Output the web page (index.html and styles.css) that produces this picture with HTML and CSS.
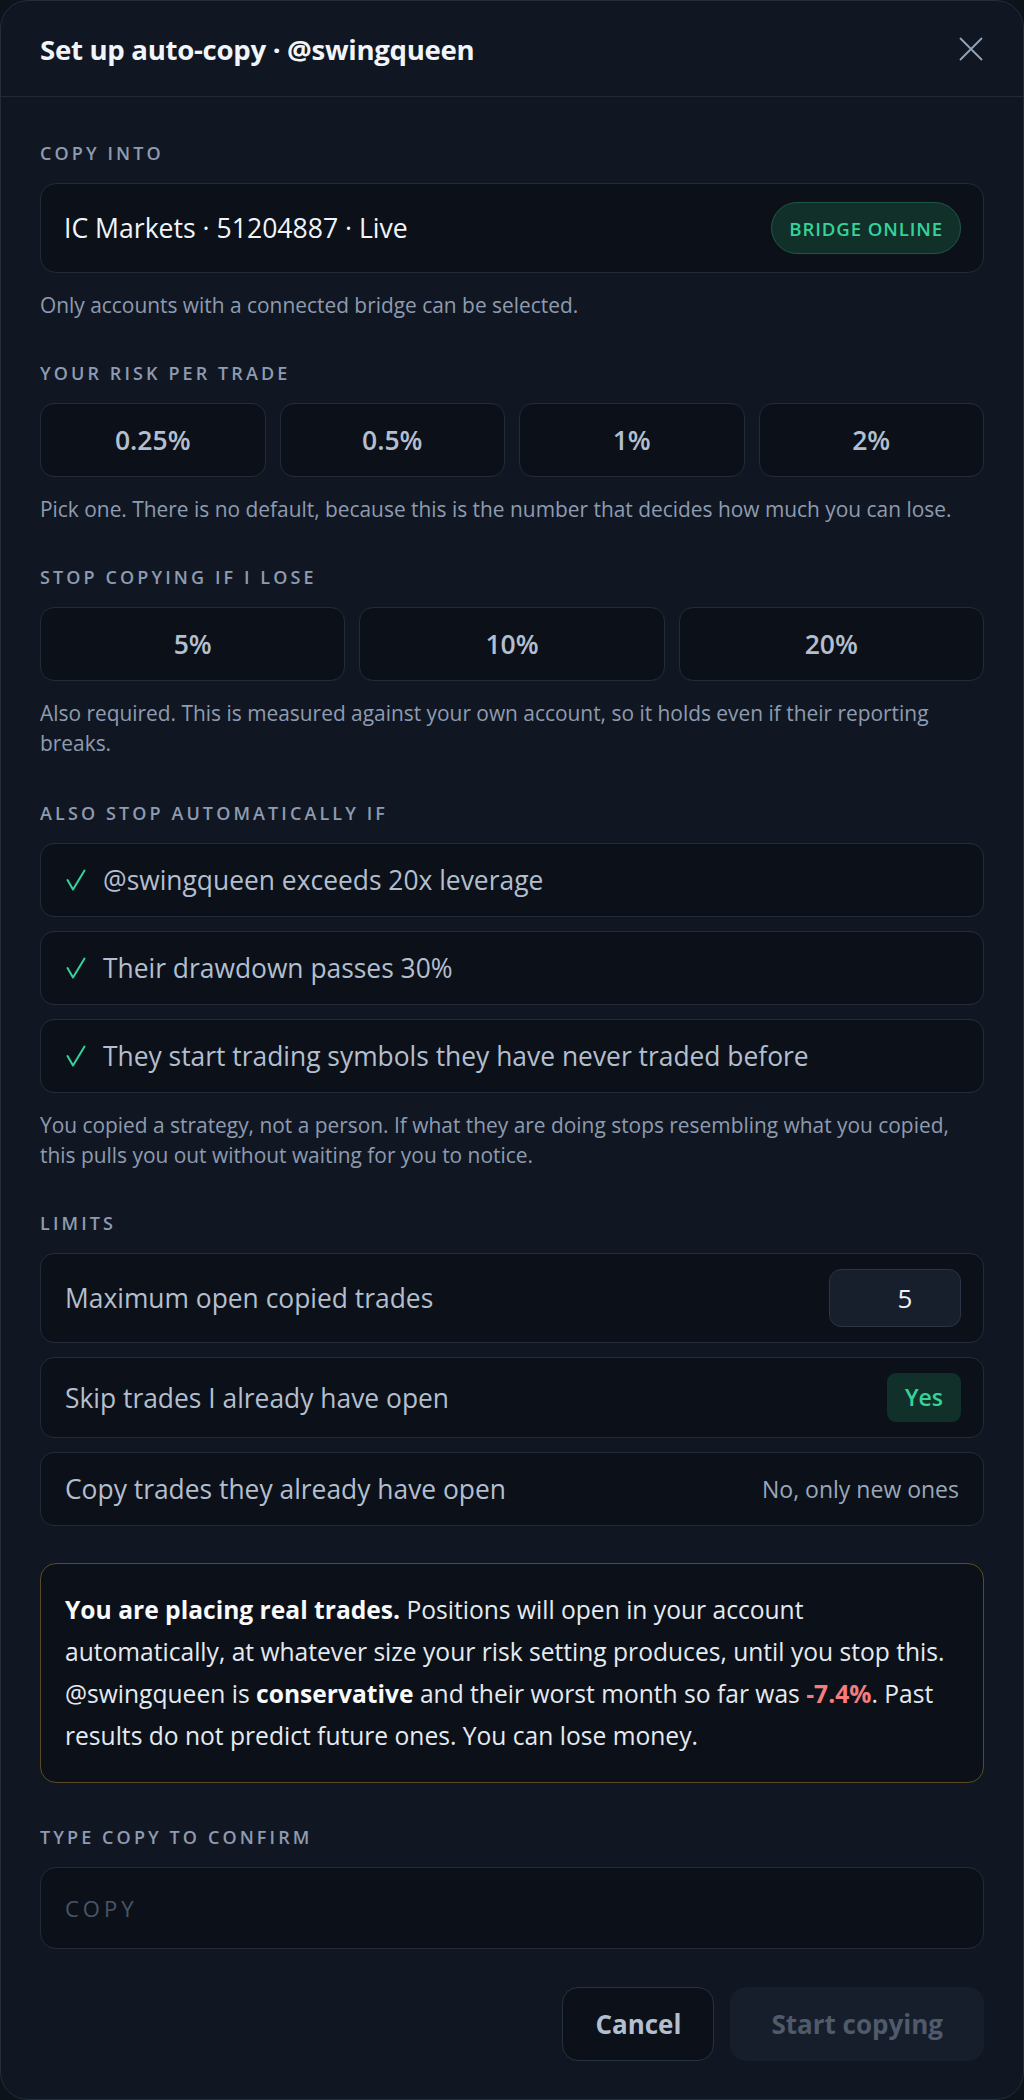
FILE: index.html
```html
<!DOCTYPE html>
<html lang="en">
<head>
<meta charset="utf-8">
<title>Set up auto-copy</title>
<link rel="stylesheet" href="styles.css">
</head>
<body>
<div class="modal" role="dialog" aria-labelledby="dlg-title">
  <header class="modal-head">
    <h1 id="dlg-title" class="modal-title">Set up auto-copy · @swingqueen</h1>
    <button class="close-btn" aria-label="Close">
      <svg width="24" height="24" viewBox="0 0 24 24" fill="none" stroke="currentColor" stroke-width="1.8" stroke-linecap="round"><path d="M1.5 1.5 L22.5 22.5 M22.5 1.5 L1.5 22.5"/></svg>
    </button>
  </header>

  <div class="modal-body">
    <section class="section">
      <div class="label">Copy into</div>
      <div class="account">
        <span class="account-name">IC Markets · 51204887 · Live</span>
        <span class="badge-online">BRIDGE ONLINE</span>
      </div>
      <p class="help">Only accounts with a connected bridge can be selected.</p>
    </section>

    <section class="section">
      <div class="label">Your risk per trade</div>
      <div class="choices four">
        <button class="choice">0.25%</button>
        <button class="choice">0.5%</button>
        <button class="choice">1%</button>
        <button class="choice">2%</button>
      </div>
      <p class="help">Pick one. There is no default, because this is the number that decides how much you can lose.</p>
    </section>

    <section class="section">
      <div class="label">Stop copying if I lose</div>
      <div class="choices three">
        <button class="choice">5%</button>
        <button class="choice">10%</button>
        <button class="choice">20%</button>
      </div>
      <p class="help">Also required. This is measured against your own account, so it holds even if their reporting breaks.</p>
    </section>

    <section class="section after-long">
      <div class="label">Also stop automatically if</div>
      <div class="rows">
        <div class="row check-row">
          <svg class="tick" width="20" height="22" viewBox="0 0 20 22" fill="none" stroke="currentColor" stroke-width="2" stroke-linejoin="round" stroke-linecap="round"><polyline points="1.5,11 7,20.5 18.5,1.5"/></svg>
          <span>@swingqueen exceeds 20x leverage</span>
        </div>
        <div class="row check-row">
          <svg class="tick" width="20" height="22" viewBox="0 0 20 22" fill="none" stroke="currentColor" stroke-width="2" stroke-linejoin="round" stroke-linecap="round"><polyline points="1.5,11 7,20.5 18.5,1.5"/></svg>
          <span>Their drawdown passes 30%</span>
        </div>
        <div class="row check-row">
          <svg class="tick" width="20" height="22" viewBox="0 0 20 22" fill="none" stroke="currentColor" stroke-width="2" stroke-linejoin="round" stroke-linecap="round"><polyline points="1.5,11 7,20.5 18.5,1.5"/></svg>
          <span>They start trading symbols they have never traded before</span>
        </div>
      </div>
      <p class="help">You copied a strategy, not a person. If what they are doing stops resembling what you copied, this pulls you out without waiting for you to notice.</p>
    </section>

    <section class="section">
      <div class="label">Limits</div>
      <div class="rows">
        <div class="row limit-row">
          <span>Maximum open copied trades</span>
          <input class="num-input" type="number" value="5" aria-label="Maximum open copied trades">
        </div>
        <div class="row limit-row">
          <span>Skip trades I already have open</span>
          <span class="pill-yes">Yes</span>
        </div>
        <div class="row limit-row">
          <span>Copy trades they already have open</span>
          <span class="value-muted">No, only new ones</span>
        </div>
      </div>
    </section>

    <p class="warning"><strong>You are placing real trades.</strong> Positions will open in your account automatically, at whatever size your risk setting produces, until you stop this. @swingqueen is <strong>conservative</strong> and their worst month so far was <strong class="neg">-7.4%</strong>. Past results do not predict future ones. You can lose money.</p>

    <section class="section confirm">
      <div class="label">Type COPY to confirm</div>
      <input class="confirm-input" type="text" placeholder="COPY" aria-label="Type COPY to confirm">
    </section>

    <footer class="actions">
      <button class="btn btn-cancel">Cancel</button>
      <button class="btn btn-start" disabled>Start copying</button>
    </footer>
  </div>
</div>
</body>
</html>
```
FILE: styles.css
```css
* {
  box-sizing: border-box;
}

html,
body {
  margin: 0;
  padding: 0;
}

body {
  background: #0c131a;
  font-family: "Open Sans", "Noto Sans", sans-serif;
  color: #b3bfcf;
}

button,
input {
  font-family: inherit;
}

/* dialog shell */
.modal {
  width: 1024px;
  height: 2100px;
  background: #111722;
  border: 1px solid #242d3c;
  border-radius: 28px;
  overflow: hidden;
}

.modal-head {
  height: 96px;
  display: flex;
  align-items: center;
  justify-content: space-between;
  padding: 0 40px 0 39px;
  border-bottom: 1px solid #222a39;
}

.modal-title {
  margin: 0;
  font-size: 27.6px;
  font-weight: 700;
  letter-spacing: -0.3px;
  color: #f1f5f9;
}

.close-btn {
  background: none;
  border: 0;
  padding: 0;
  color: #94a3b8;
  display: flex;
  cursor: pointer;
}

.modal-body {
  padding: 44px 39px 39px;
}

/* sections */
.section + .section {
  margin-top: 41px;
}

.section + .section.after-long {
  margin-top: 43px;
}

.rows + .help,
.choices + .help,
.account + .help {
  margin-top: 17px;
}

.label {
  font-size: 18px;
  line-height: 24px;
  font-weight: 600;
  letter-spacing: 3.1px;
  text-transform: uppercase;
  color: #8e9bb0;
  margin-bottom: 18px;
}

.help {
  margin: 0;
  font-size: 20.9px;
  line-height: 30px;
  color: #8e9bb0;
}

/* account picker */
.account {
  height: 90px;
  display: flex;
  align-items: center;
  justify-content: space-between;
  padding: 0 22px 0 23px;
  background: #0c1119;
  border: 1px solid #232b3a;
  border-radius: 16px;
}

.account-name {
  font-size: 26.6px;
  color: #f1f5f9;
}

.badge-online {
  height: 52px;
  display: inline-flex;
  align-items: center;
  padding: 0 17px;
  border-radius: 26px;
  background: #12302a;
  border: 1.5px solid #1d5846;
  color: #34d399;
  font-size: 18.6px;
  font-weight: 600;
  letter-spacing: 0.9px;
}

/* option buttons */
.choices {
  display: grid;
  gap: 14px;
}

.choices.four {
  grid-template-columns: repeat(4, 1fr);
}

.choices.three {
  grid-template-columns: repeat(3, 1fr);
}

.choice {
  height: 74px;
  background: #0c1119;
  border: 1px solid #232b3a;
  border-radius: 14px;
  color: #b3bfcf;
  font-size: 26.5px;
  font-weight: 600;
  cursor: pointer;
}

/* list rows */
.rows {
  display: flex;
  flex-direction: column;
  gap: 14px;
}

.row {
  display: flex;
  align-items: center;
  padding: 16px 18px 16px 24px;
  min-height: 74px;
  background: #0c1119;
  border: 1px solid #232b3a;
  border-radius: 14px;
  font-size: 26.4px;
  line-height: 40px;
  color: #b3bfcf;
}

.check-row {
  gap: 17px;
  padding-left: 25px;
}

.tick {
  color: #34d399;
  flex: none;
}

.limit-row {
  justify-content: space-between;
  padding-top: 15px;
  padding-bottom: 15px;
  padding-right: 22px;
}

.num-input {
  width: 132px;
  height: 58px;
  background: #171e2c;
  border: 1px solid #2b3445;
  border-radius: 12px;
  color: #eef2f7;
  font-size: 26px;
  text-align: center;
  padding: 0 0 0 20px;
  outline: none;
  -moz-appearance: textfield;
}

.num-input::-webkit-outer-spin-button,
.num-input::-webkit-inner-spin-button {
  -webkit-appearance: none;
  margin: 0;
}

.pill-yes {
  height: 49px;
  display: inline-flex;
  align-items: center;
  padding: 0 18px;
  border-radius: 9px;
  background: #12302a;
  color: #34d399;
  font-size: 23px;
  font-weight: 600;
  line-height: 1;
}

.value-muted {
  font-size: 23px;
  color: #9ba7b9;
  padding-right: 2px;
}

/* risk notice */
.warning {
  margin: 37px 0 0;
  padding: 25px 24px;
  border: 1px solid #5b4b22;
  border-radius: 16px;
  background: #0c1119;
  font-size: 24.6px;
  line-height: 42px;
  color: #e5eaf1;
}

.warning strong {
  font-weight: 700;
  color: #f8fafc;
}

.warning strong.neg {
  color: #f47c7c;
}

/* confirmation */
.confirm {
  margin-top: 42px;
}

.confirm-input {
  display: block;
  width: 100%;
  height: 82px;
  padding: 0 24px;
  background: #0c1119;
  border: 1px solid #232b3a;
  border-radius: 16px;
  color: #e5eaf1;
  font-size: 22px;
  letter-spacing: 4px;
  outline: none;
}

.confirm-input::placeholder {
  color: #4a5567;
  letter-spacing: 4px;
}

/* footer actions */
.actions {
  margin-top: 38px;
  display: flex;
  justify-content: flex-end;
  gap: 16px;
}

.btn {
  height: 74px;
  border-radius: 16px;
  font-size: 26px;
  font-weight: 700;
  cursor: pointer;
}

.btn-cancel {
  padding: 0 32px;
  background: #0c1119;
  border: 1px solid #283142;
  color: #b3bfcf;
}

.btn-start {
  padding: 0 40px;
  background: #171e2b;
  border: 1px solid #171e2b;
  color: #4f5a6b;
  cursor: default;
}
```
